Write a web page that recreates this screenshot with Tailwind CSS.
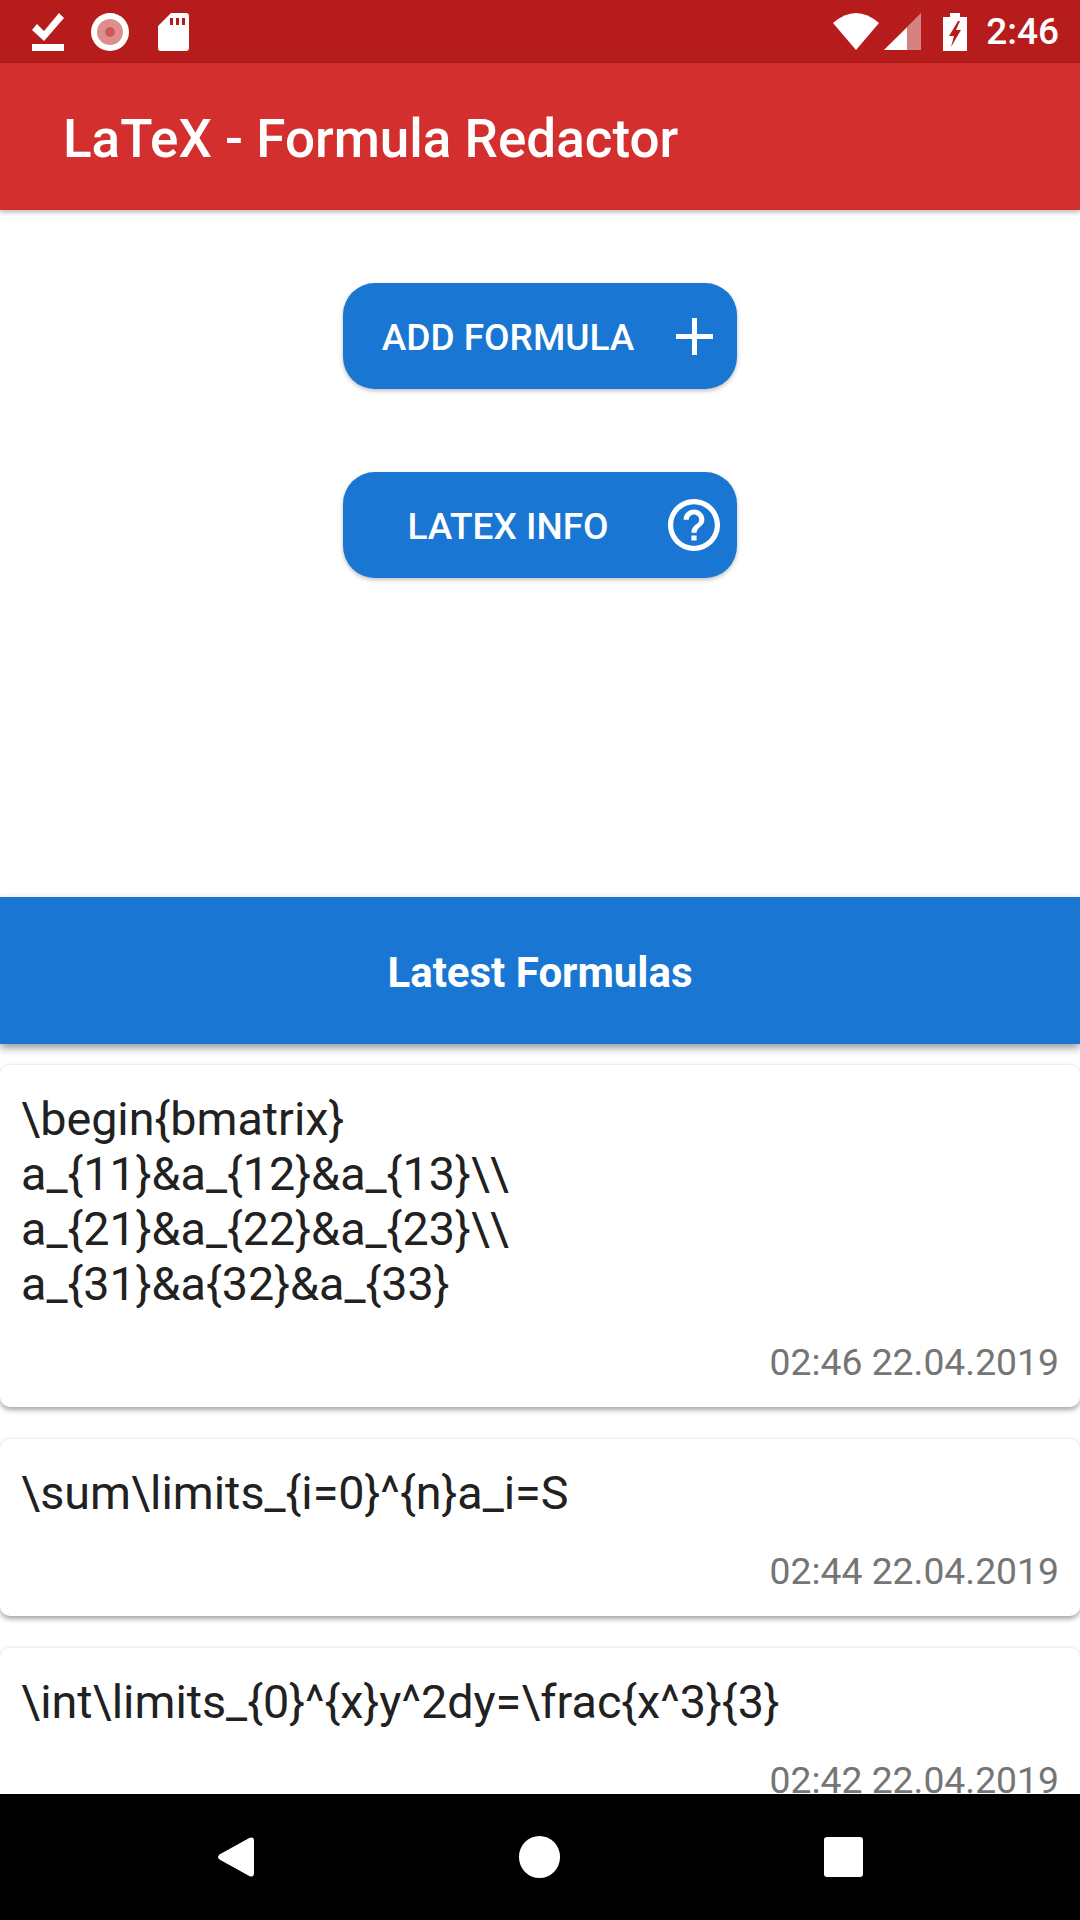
<!DOCTYPE html>
<html lang="en">

<head>
  <meta charset="UTF-8">
  <meta name="viewport" content="width=device-width, initial-scale=1.0">
  <title>LaTeX - Formula Redactor</title>
  <script src="https://cdn.jsdelivr.net/npm/@tailwindcss/browser@4"></script>
</head>

<body>
  <div class="w-[1080px] h-[1920px] flex flex-col bg-white overflow-hidden font-['Roboto',sans-serif]">
    <!-- Status bar -->
    <div class="h-[63px] shrink-0 bg-[#b71c1c] flex items-center text-white">
      <svg class="ml-[32px] w-[32px] h-[38px]" viewBox="0 0 32 38" fill="white">
        <path d="M0 17 L5 11 L12 18 L27 0 L32 5 L12 28 Z" />
        <rect x="0" y="31" width="32" height="7" />
      </svg>
      <svg class="ml-[27px] w-[38px] h-[38px]" viewBox="0 0 38 38">
        <circle cx="19" cy="19" r="19" fill="white" />
        <circle cx="19" cy="19" r="13" fill="#e08d8d" />
        <circle cx="19" cy="19" r="5" fill="#cd5a5a" />
      </svg>
      <svg class="ml-[29px] w-[31px] h-[38px]" viewBox="0 0 31 38" fill="white">
        <path fill-rule="evenodd" d="M13 0 H28 Q31 0 31 3 V35 Q31 38 28 38 H3 Q0 38 0 35 V13 Z M12 5 V12 H15 V5 Z M18 5 V12 H21 V5 Z M24 5 V12 H27 V5 Z" />
      </svg>
      <svg class="ml-auto w-[46px] h-[37px]" viewBox="0 0 46 37" fill="white">
        <path d="M0 10 Q23 -10 46 10 L23 37 Z" />
      </svg>
      <svg class="ml-[5px] w-[37px] h-[37px]" viewBox="0 0 37 37">
        <path d="M37 0 V37 H0 Z" fill="white" fill-opacity="0.45" />
        <path d="M23 14.500 V37 H0 Z" fill="white" />
      </svg>
      <svg class="ml-[22px] w-[24px] h-[38px]" viewBox="0 0 24 38">
        <path fill="white" fill-rule="evenodd" d="M7 0 H17 V4 H24 V38 H0 V4 H7 Z M15 8 L6 23 H11 L8 34 L18 17 H13 L17 8 Z" />
      </svg>
      <span class="ml-[19px] mr-[21px] text-[37px] leading-none font-medium">2:46</span>
    </div>

    <!-- App bar -->
    <header class="h-[147px] shrink-0 bg-[#d32f2f] flex items-center pl-[63px] pt-[5px] shadow-[0_2px_5px_rgba(0,0,0,0.3)] relative">
      <h1 class="text-[53px] font-medium text-white leading-none">LaTeX - Formula Redactor</h1>
    </header>

    <!-- Buttons -->
    <div class="h-[687px] shrink-0 flex flex-col items-center pt-[73px] gap-[83px]">
      <button class="w-[394px] h-[106px] rounded-[32px] bg-[#1976d2] shadow-[0_2px_4px_rgba(0,0,0,0.25)] flex items-center text-white text-[37px] font-medium">
        <span class="w-[330px] pt-[3px] text-center">ADD FORMULA</span>
        <svg class="ml-[3px] w-[37px] h-[37px]" viewBox="0 0 37 37" fill="white">
          <rect x="16" y="0" width="5" height="37" />
          <rect x="0" y="16" width="37" height="5" />
        </svg>
      </button>
      <button class="w-[394px] h-[106px] rounded-[32px] bg-[#1976d2] shadow-[0_2px_4px_rgba(0,0,0,0.25)] flex items-center text-white text-[37px] font-medium">
        <span class="w-[330px] pt-[3px] text-center">LATEX INFO</span>
        <svg class="-ml-[5px] w-[52px] h-[52px]" viewBox="2 2 20 20" fill="white">
          <path d="M11 18h2v-2h-2v2zm1-16C6.480 2 2 6.480 2 12s4.480 10 10 10 10-4.480 10-10S17.520 2 12 2zm0 18c-4.410 0-8-3.590-8-8s3.590-8 8-8 8 3.590 8 8-3.590 8-8 8zm0-14c-2.210 0-4 1.790-4 4h2c0-1.100.9-2 2-2s2 .9 2 2c0 2-3 1.750-3 5h2c0-2.250 3-2.500 3-5 0-2.210-1.790-4-4-4z" />
        </svg>
      </button>
    </div>

    <!-- Latest formulas heading -->
    <div class="h-[147px] shrink-0 bg-[#1976d2] flex items-center justify-center pt-[4px] shadow-[0_4px_8px_rgba(0,0,0,0.4)] relative">
      <h2 class="text-[42px] font-bold text-white leading-none">Latest Formulas</h2>
    </div>

    <!-- Formula cards -->
    <div class="flex-1 min-h-0 overflow-hidden flex flex-col gap-[31px] pt-[20px]">
      <div class="shrink-0 h-[343px] rounded-[10px] bg-white border-t border-[#eeeeee] shadow-[0_3px_5px_rgba(0,0,0,0.35)] pl-[21px] pr-[21px] pt-[27px] flex flex-col">
        <p class="text-[46.700px] leading-[55px] text-[#212121]">\begin{bmatrix}<br>a_{11}&amp;a_{12}&amp;a_{13}\\<br>a_{21}&amp;a_{22}&amp;a_{23}\\<br>a_{31}&amp;a{32}&amp;a_{33}</p>
        <p class="mt-[28px] text-right text-[37.300px] leading-[44px] text-[#757575]">02:46 22.04.2019</p>
      </div>
      <div class="shrink-0 h-[178px] rounded-[10px] bg-white border-t border-[#eeeeee] shadow-[0_3px_5px_rgba(0,0,0,0.35)] pl-[21px] pr-[21px] pt-[27px] flex flex-col">
        <p class="text-[46.700px] leading-[55px] text-[#212121]">\sum\limits_{i=0}^{n}a_i=S</p>
        <p class="mt-[28px] text-right text-[37.300px] leading-[44px] text-[#757575]">02:44 22.04.2019</p>
      </div>
      <div class="shrink-0 h-[178px] rounded-[10px] bg-white border-t border-[#eeeeee] shadow-[0_3px_5px_rgba(0,0,0,0.35)] pl-[21px] pr-[21px] pt-[27px] flex flex-col">
        <p class="text-[46.700px] leading-[55px] text-[#212121]">\int\limits_{0}^{x}y^2dy=\frac{x^3}{3}</p>
        <p class="mt-[28px] text-right text-[37.300px] leading-[44px] text-[#757575]">02:42 22.04.2019</p>
      </div>
    </div>

    <!-- Navigation bar -->
    <nav class="h-[126px] shrink-0 bg-black flex items-center relative">
      <svg class="ml-[218px] w-[36px] h-[42px]" viewBox="0 0 38 42" fill="white">
        <path d="M2 18 L33 1 Q38 -1 38 4 V38 Q38 43 33 41 L2 24 Q-2 21 2 18 Z" />
      </svg>
      <div class="ml-[265px] w-[41px] h-[42px] rounded-full bg-white"></div>
      <div class="ml-[264px] w-[39px] h-[40px] rounded-[3px] bg-white"></div>
    </nav>
  </div>
</body>

</html>
